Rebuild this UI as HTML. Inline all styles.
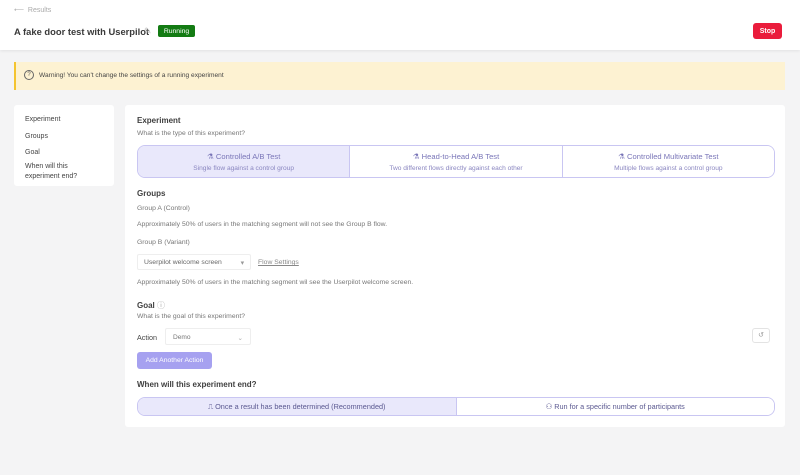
<!DOCTYPE html><html><head><style>
*{box-sizing:border-box;margin:0;padding:0}
body{width:800px;height:475px;background:#f4f4f5;font-family:"Liberation Sans",sans-serif;color:#555;position:relative;overflow:hidden;font-size:7px}
.a{position:absolute}
.hdr{left:0;top:0;width:800px;height:50px;background:#fff;box-shadow:0 1px 3px rgba(0,0,0,.08)}
.seg{display:flex;border:1px solid #c9c6f2;border-radius:8px;overflow:hidden}
.seg>div{flex:1;text-align:center;border-left:1px solid #c9c6f2;color:#7a76b8}
.seg>div:first-child{border-left:none;background:#e9e8fb}
.t{font-size:8px;font-weight:bold;color:#3f3f3f}
.s{font-size:6.8px;color:#777}
</style></head><body>
<div class="a hdr"></div>
<div class="a" style="left:14px;top:6px;font-size:7px;color:#aaa">⟵&nbsp; Results</div>
<div class="a" style="left:14px;top:26px;font-size:9.4px;font-weight:bold;color:#3a3a3a;white-space:nowrap">A fake door test with Userpilot</div>
<div class="a" style="left:144px;top:26px;font-size:9px;color:#bbb">✎</div>
<div class="a" style="left:158px;top:25px;width:37px;height:12px;background:#137b13;border-radius:2px;color:#fff;font-size:6.8px;text-align:center;line-height:13px">Running</div>
<div class="a" style="left:753px;top:23px;width:29px;height:16px;background:#ea1c3c;border-radius:3px;color:#fff;font-size:7px;font-weight:bold;text-align:center;line-height:17px">Stop</div>
<div class="a" style="left:14px;top:62px;width:771px;height:28px;background:#fdf2d2;border-left:2px solid #f4c430"></div>
<div class="a" style="left:24px;top:70px;width:10px;height:10px;border:1px solid #666;border-radius:50%;font-size:6px;text-align:center;line-height:8px;color:#555">?</div>
<div class="a" style="left:39px;top:72px;font-size:6.6px;color:#444">Warning! You can't change the settings of a running experiment</div>
<div class="a" style="left:14px;top:105px;width:100px;height:81px;background:#fff;border-radius:3px"></div>
<div class="a" style="left:25px;top:112px;font-size:7px;color:#444;line-height:16.5px">Experiment<br>Groups<br>Goal</div>
<div class="a" style="left:25px;top:162px;font-size:7px;color:#444;line-height:9.5px">When will this<br>experiment end?</div>
<div class="a" style="left:125px;top:105px;width:660px;height:322px;background:#fff;border-radius:3px"></div>
<div class="a t" style="left:137px;top:116px">Experiment</div>
<div class="a s" style="left:137px;top:130px">What is the type of this experiment?</div>
<div class="a seg" style="left:137px;top:145px;width:638px;height:33px">
<div><div style="margin-top:6px;font-size:7.6px">⚗ Controlled A/B Test</div><div style="margin-top:4px;font-size:6.6px;color:#8a86c0">Single flow against a control group</div></div>
<div style="background:#fff"><div style="margin-top:6px;font-size:7.6px">⚗ Head-to-Head A/B Test</div><div style="margin-top:4px;font-size:6.6px;color:#8a86c0">Two different flows directly against each other</div></div>
<div style="background:#fff"><div style="margin-top:6px;font-size:7.6px">⚗ Controlled Multivariate Test</div><div style="margin-top:4px;font-size:6.6px;color:#8a86c0">Multiple flows against a control group</div></div>
</div>
<div class="a t" style="left:137px;top:189px">Groups</div>
<div class="a s" style="left:137px;top:205px">Group A (Control)</div>
<div class="a s" style="left:137px;top:221px">Approximately 50% of users in the matching segment will not see the Group B flow.</div>
<div class="a s" style="left:137px;top:239px">Group B (Variant)</div>
<div class="a" style="left:137px;top:254px;width:114px;height:16px;border:1px solid #eee;border-radius:2px;font-size:6.8px;color:#666;padding:4px 6px">Userpilot welcome screen<span style="float:right;color:#999">▾</span></div>
<div class="a s" style="left:258px;top:259px;text-decoration:underline;color:#888">Flow Settings</div>
<div class="a s" style="left:137px;top:279px">Approximately 50% of users in the matching segment wil see the Userpilot welcome screen.</div>
<div class="a t" style="left:137px;top:300px">Goal <span style="font-weight:normal;color:#aaa">ⓘ</span></div>
<div class="a s" style="left:137px;top:313px">What is the goal of this experiment?</div>
<div class="a" style="left:137px;top:333px;font-size:7.2px;color:#444">Action</div>
<div class="a" style="left:165px;top:328px;width:86px;height:17px;border:1px solid #eee;border-radius:2px;font-size:6.6px;color:#777;padding:5px 7px">Demo<span style="float:right;color:#aaa">⌄</span></div>
<div class="a" style="left:752px;top:328px;width:18px;height:15px;border:1px solid #e3e3e3;border-radius:3px;font-size:7px;color:#999;text-align:center;line-height:13px">↺</div>
<div class="a" style="left:137px;top:352px;width:75px;height:17px;background:#a6a1f0;border-radius:3px;color:#fff;font-size:6.8px;text-align:center;line-height:17px">Add Another Action</div>
<div class="a t" style="left:137px;top:380px">When will this experiment end?</div>
<div class="a seg" style="left:137px;top:397px;width:638px;height:19px;line-height:17px;font-size:7.3px">
<div style="color:#5a5890">⎍ Once a result has been determined (Recommended)</div>
<div style="background:#fff;color:#5a5890">⚇ Run for a specific number of participants</div>
</div>
</body></html>
